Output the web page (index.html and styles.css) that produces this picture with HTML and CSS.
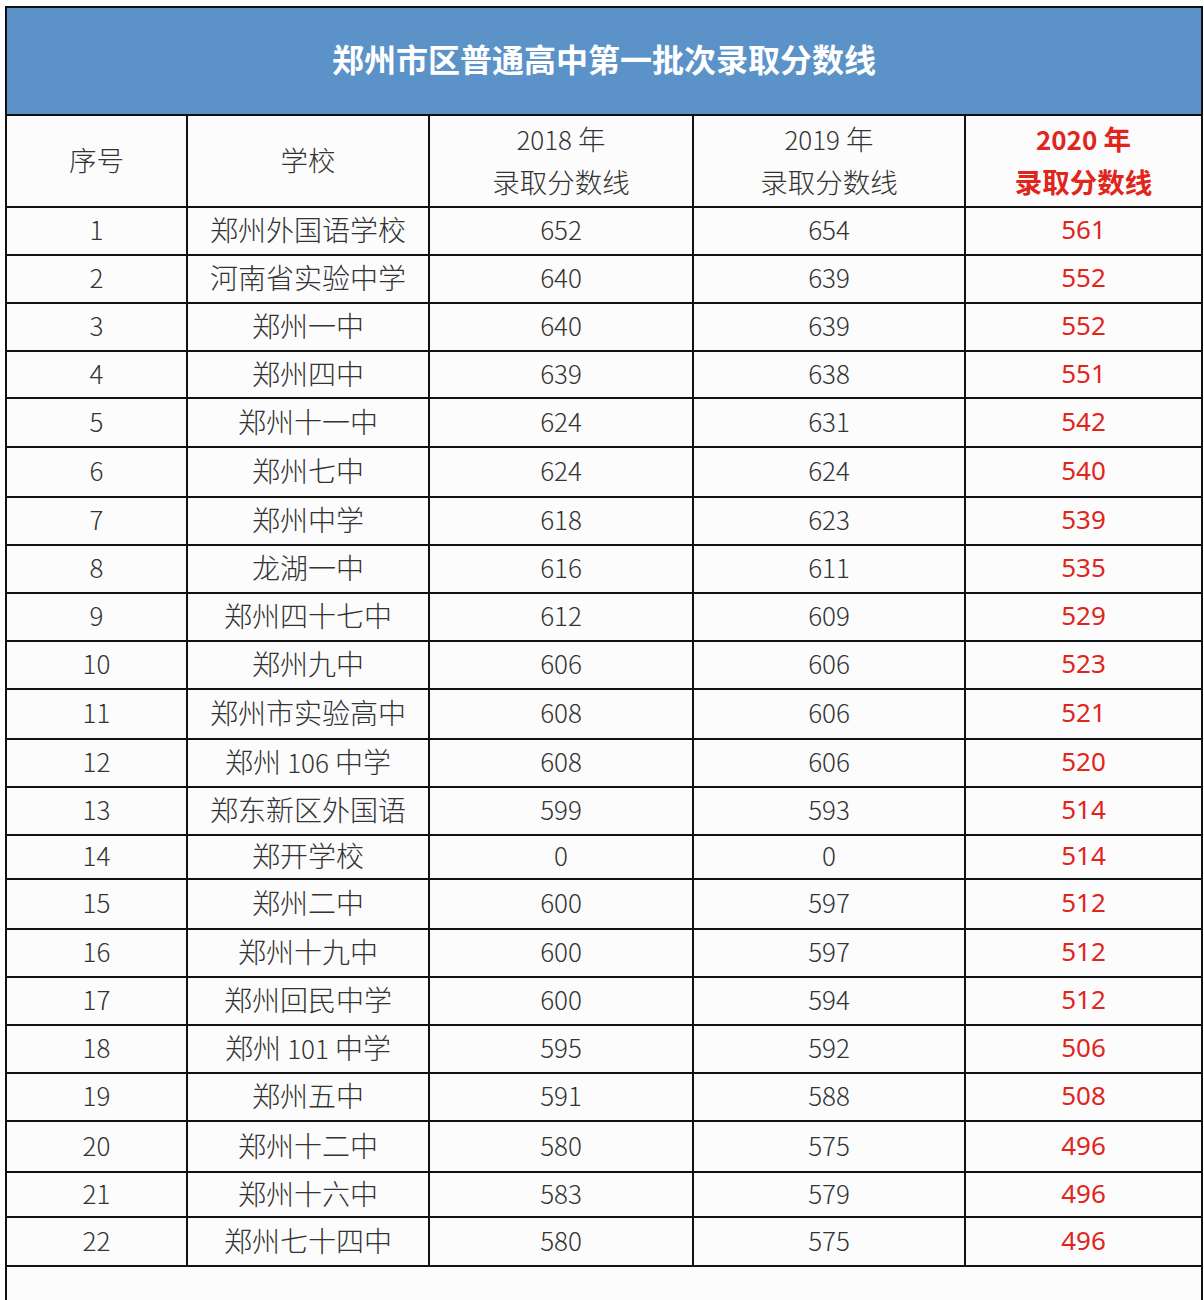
FILE: index.html
```html
<!DOCTYPE html>
<html lang="zh-CN">
<head>
<meta charset="utf-8">
<title>郑州市区普通高中第一批次录取分数线</title>
<link rel="stylesheet" href="styles.css">
</head>
<body>
<div class="page">
<table class="scores">
  <colgroup>
    <col class="c1"><col class="c2"><col class="c3"><col class="c4"><col class="c5">
  </colgroup>
  <thead>
    <tr class="title-row"><th colspan="5" class="title">郑州市区普通高中第一批次录取分数线</th></tr>
    <tr class="head-row">
      <th>序号</th>
      <th>学校</th>
      <th><span class="num">2018</span> 年<br>录取分数线</th>
      <th><span class="num">2019</span> 年<br>录取分数线</th>
      <th class="red bold"><span class="num">2020</span> 年<br>录取分数线</th>
    </tr>
  </thead>
  <tbody>
    <tr><td>1</td><td class="school">郑州外国语学校</td><td>652</td><td>654</td><td class="red">561</td></tr>
    <tr><td>2</td><td class="school">河南省实验中学</td><td>640</td><td>639</td><td class="red">552</td></tr>
    <tr><td>3</td><td class="school">郑州一中</td><td>640</td><td>639</td><td class="red">552</td></tr>
    <tr class="h47"><td>4</td><td class="school">郑州四中</td><td>639</td><td>638</td><td class="red">551</td></tr>
    <tr class="h49"><td>5</td><td class="school">郑州十一中</td><td>624</td><td>631</td><td class="red">542</td></tr>
    <tr class="h50"><td>6</td><td class="school">郑州七中</td><td>624</td><td>624</td><td class="red">540</td></tr>
    <tr><td>7</td><td class="school">郑州中学</td><td>618</td><td>623</td><td class="red">539</td></tr>
    <tr><td>8</td><td class="school">龙湖一中</td><td>616</td><td>611</td><td class="red">535</td></tr>
    <tr><td>9</td><td class="school">郑州四十七中</td><td>612</td><td>609</td><td class="red">529</td></tr>
    <tr><td>10</td><td class="school">郑州九中</td><td>606</td><td>606</td><td class="red">523</td></tr>
    <tr class="h50"><td>11</td><td class="school">郑州市实验高中</td><td>608</td><td>606</td><td class="red">521</td></tr>
    <tr><td>12</td><td class="school">郑州 <span class="num">106</span> 中学</td><td>608</td><td>606</td><td class="red">520</td></tr>
    <tr><td>13</td><td class="school">郑东新区外国语</td><td>599</td><td>593</td><td class="red">514</td></tr>
    <tr class="h44"><td>14</td><td class="school">郑开学校</td><td>0</td><td>0</td><td class="red">514</td></tr>
    <tr class="h50"><td>15</td><td class="school">郑州二中</td><td>600</td><td>597</td><td class="red">512</td></tr>
    <tr><td>16</td><td class="school">郑州十九中</td><td>600</td><td>597</td><td class="red">512</td></tr>
    <tr><td>17</td><td class="school">郑州回民中学</td><td>600</td><td>594</td><td class="red">512</td></tr>
    <tr><td>18</td><td class="school">郑州 <span class="num">101</span> 中学</td><td>595</td><td>592</td><td class="red">506</td></tr>
    <tr><td>19</td><td class="school">郑州五中</td><td>591</td><td>588</td><td class="red">508</td></tr>
    <tr class="h51"><td>20</td><td class="school">郑州十二中</td><td>580</td><td>575</td><td class="red">496</td></tr>
    <tr class="h45"><td>21</td><td class="school">郑州十六中</td><td>583</td><td>579</td><td class="red">496</td></tr>
    <tr class="h49"><td>22</td><td class="school">郑州七十四中</td><td>580</td><td>575</td><td class="red">496</td></tr>
    <tr class="blank"><td colspan="5"></td></tr>
  </tbody>
</table>
</div>
</body>
</html>
```

FILE: styles.css
```css
html, body {
  margin: 0;
  padding: 0;
  background: #ffffff;
}
.page {
  padding: 6px 0 0 5px;
  height: 1300px;
  overflow: hidden;
  box-sizing: border-box;
}
.scores {
  border-collapse: collapse;
  table-layout: fixed;
  width: 1196px;
  background: #fcfcfd;
  font-family: "Noto Sans CJK SC", "Noto Sans", sans-serif;
  color: #333333;
}
.c1 { width: 181px; }
.c2 { width: 242px; }
.c3 { width: 264px; }
.c4 { width: 272px; }
.c5 { width: 237px; }
.scores th, .scores td {
  border: 2px solid #111;
  text-align: center;
  padding: 0;
  font-size: 26px;
  font-weight: 300;
  line-height: 42px;
}
.title-row th {
  height: 100px;
  padding-bottom: 6px;
  background: #5b93c9;
  color: #ffffff;
  font-size: 32px;
  font-weight: 700;
}
.head-row th {
  height: 86px;
  font-size: 27.5px;
  padding-bottom: 4px;
}
.head-row th .num {
  font-size: 26px;
}
.scores tbody td {
  height: 42px;
  line-height: 34px;
  padding-bottom: 4px;
}
.scores tbody tr.h44 td { height: 38px; }
.scores tbody tr.h45 td { height: 39px; }
.scores tbody tr.h47 td { height: 41px; }
.scores tbody tr.h49 td { height: 43px; }
.scores tbody tr.h50 td { height: 44px; }
.scores tbody tr.h51 td { height: 45px; }
.scores tbody td.school {
  font-size: 28px;
}
.scores tbody td.school .num {
  font-size: 26px;
}
.scores tbody tr.blank td {
  height: 60px;
  border-bottom: none;
}
.red {
  color: #e0251c;
}
.scores td.red {
  font-family: "Noto Sans", "Noto Sans CJK SC", sans-serif;
  font-weight: 400;
}
.scores th.bold {
  font-weight: 700;
}
```
